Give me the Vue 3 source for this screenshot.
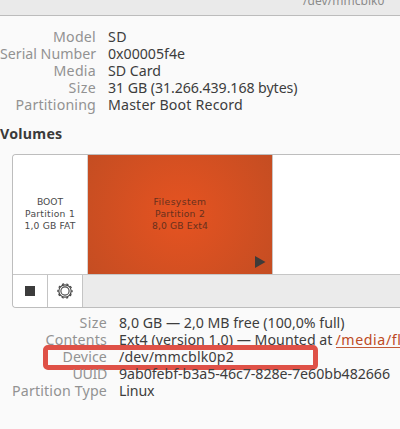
<script setup>
const drive = [
  { label: 'Model', lw: 43, value: 'SD', vw: 19 },
  { label: 'Serial Number', lw: 96, value: '0x00005f4e', vw: 77 },
  { label: 'Media', lw: 42.5, value: 'SD Card', vw: 53 },
  { label: 'Size', lw: 27.5, value: '31 GB (31.266.439.168 bytes)', vw: 189.5 },
  { label: 'Partitioning', lw: 80.5, value: 'Master Boot Record', vw: 135 },
]
const volume = [
  { label: 'Size', lw: 27.5, value: '8,0 GB — 2,0 MB free (100,0% full)', vw: 225.5 },
  { label: 'Contents', lw: 61.5, value: 'Ext4 (version 1.0) — Mounted at', vw: 213.5, link: '/media/fl' },
  { label: 'Device', lw: 44.5, value: '/dev/mmcblk0p2', vw: 115, marked: true },
  { label: 'UUID', lw: 34.5, value: '9ab0febf-b3a5-46c7-828e-7e60bb482666', vw: 271 },
  { label: 'Partition Type', lw: 95, value: 'Linux', vw: 35.5 },
]

// Spreads the letters so that a text takes up the given width.
const vFit = {
  mounted(el, { value }) {
    const natural = el.getBoundingClientRect().width
    el.style.letterSpacing = (value - natural) / el.textContent.length + 'px'
  },
}
</script>

<template>
  <main class="window">
    <header class="titlebar"><span v-fit="81.5">/dev/mmcblk0</span></header>

    <section class="details drive">
      <div v-for="r in drive" :key="r.label" class="row">
        <div class="label"><span v-fit="r.lw">{{ r.label }}</span></div>
        <div class="value"><span v-fit="r.vw">{{ r.value }}</span></div>
      </div>
    </section>

    <h2 class="heading"><span v-fit="62.5">Volumes</span></h2>

    <section class="volumes">
      <div class="map">
        <div class="part boot">
          <span v-fit="26">BOOT</span>
          <span v-fit="50">Partition 1</span>
          <span v-fit="51">1,0 GB FAT</span>
        </div>
        <div class="part selected">
          <span v-fit="53">Filesystem</span>
          <span v-fit="50">Partition 2</span>
          <span v-fit="56">8,0 GB Ext4</span>
          <svg class="play" width="11" height="12" viewBox="0 0 11 12"><path d="M0 0L10.5 6L0 12Z" fill="#3f3b39" /></svg>
        </div>
        <div class="part free"></div>
      </div>
      <div class="toolbar">
        <button class="tool" aria-label="Unmount"><i class="stop"></i></button>
        <button class="tool" aria-label="Options">
          <svg width="18" height="18" viewBox="-9 -9 18 18" fill="none" stroke="#454545">
            <circle r="6.2" stroke-width="1.2" />
            <circle r="4.1" stroke-width="1.1" />
            <circle r="7.1" stroke-width="1.2" stroke-dasharray="2.2 2.261" stroke-dashoffset="1.1" />
          </svg>
        </button>
      </div>
    </section>

    <section class="details volume">
      <div v-for="r in volume" :key="r.label" class="row">
        <div class="label"><span v-fit="r.lw">{{ r.label }}</span></div>
        <div class="value">
          <span v-fit="r.vw">{{ r.value }}</span>
          <a v-if="r.link" class="link"><span v-fit="66">{{ r.link }}</span></a>
        </div>
        <div v-if="r.marked" class="marker"></div>
      </div>
    </section>
  </main>
</template>

<style>
body {
  margin: 0;
  background: #fafafa;
}
</style>

<style scoped>
.window {
  width: 400px;
  height: 429px;
  overflow: hidden;
  background: #fafafa;
  color: #3d3d3d;
  font: 14.2px/17px "Noto Sans", "Open Sans", sans-serif;
  white-space: nowrap;
}
.titlebar {
  display: flex;
  align-items: flex-end;
  box-sizing: border-box;
  height: 16px;
  padding: 0 0 6px 303px;
  border-bottom: 1px solid #bcbcbc;
  background: #eaeaea;
  color: #8b8b8b;
  font-size: 12px;
}
.row {
  display: flex;
  position: relative;
  height: 17px;
}
.drive {
  padding-top: 12px;
}
.label {
  display: flex;
  justify-content: flex-end;
  flex: none;
  width: 96px;
  color: #929292;
}
.value {
  display: flex;
  padding-left: 12px;
}
.heading {
  margin: 12px 0 0;
  font-size: 14.2px;
  line-height: 17px;
  color: #3a3a3a;
}
.volumes {
  box-sizing: border-box;
  height: 154px;
  margin: 12px 0 0 12px;
  border: 1px solid #bdbdbd;
  border-right: 0;
  border-radius: 4px 0 0 4px;
  overflow: hidden;
  background: #ebebeb;
}
.map {
  display: flex;
  height: 119px;
  border-bottom: 1px solid #c6c6c6;
  background: #fff;
}
.part {
  display: flex;
  flex-direction: column;
  align-items: center;
  justify-content: center;
  position: relative;
  box-sizing: border-box;
  padding-bottom: 2px;
  color: #4a4a4a;
  font: 9.2px/12px "DejaVu Sans", sans-serif;
}
.boot {
  width: 75px;
  border-right: 1px solid #d8d2d0;
}
.selected {
  width: 185px;
  border-right: 1px solid #c9c3c1;
  background: radial-gradient(circle at 50% 50%, #e65321 0, #c44d22 110px);
  color: #67301d;
}
.free {
  flex: 1;
}
.play {
  position: absolute;
  right: 6px;
  bottom: 6px;
}
.toolbar {
  display: flex;
  height: 32px;
}
.tool {
  display: flex;
  align-items: center;
  justify-content: center;
  box-sizing: border-box;
  width: 35px;
  padding: 0;
  border: 0;
  border-right: 1px solid #c4c4c4;
  background: #fff;
}
.stop {
  width: 10px;
  height: 10px;
  background: #3c3c3c;
}
.volume {
  padding-top: 6px;
}
.volume .label {
  width: 107px;
}
.link {
  margin-left: 3px;
  height: 17px;
  box-sizing: border-box;
  border-bottom: 1px solid #c35a36;
  color: #bd4a24;
}
.marker {
  position: absolute;
  left: 43px;
  top: -3px;
  box-sizing: border-box;
  width: 275px;
  height: 25px;
  border: 5px solid #df5147;
  border-radius: 5px;
}
</style>
